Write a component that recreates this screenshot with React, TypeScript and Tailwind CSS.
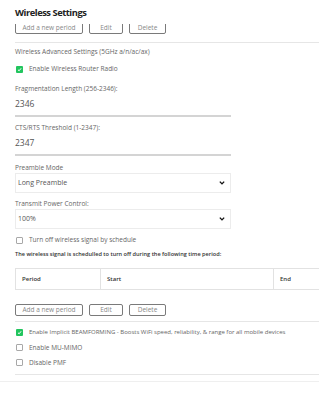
import React from "react";

function Box({ checked }: { checked?: boolean }) {
  return checked ? (
    <span className="flex h-[7px] w-[7px] shrink-0 items-center justify-center rounded-[1px] bg-[#22c55e]">
      <svg width="5" height="5" viewBox="0 0 10 10">
        <path d="M2 5.5 L4.2 7.6 L8.2 2.6" fill="none" stroke="#fff" strokeWidth="2" />
      </svg>
    </span>
  ) : (
    <span className="h-[7px] w-[7px] shrink-0 rounded-[1px] border border-[#a8a8a8] bg-white" />
  );
}

function Buttons() {
  return (
    <div className="flex gap-[6px]">
      {["Add a new period", "Edit", "Delete"].map((t, i) => (
        <button
          key={t}
          className={`h-[12px] rounded-[2px] border border-[#7a7a7a] bg-white text-[6.5px] leading-[10px] text-[#888] ${
            i === 0 ? "w-[68px]" : i === 1 ? "w-[34px]" : "w-[37px]"
          }`}
        >
          {t}
        </button>
      ))}
    </div>
  );
}

function Select({ value }: { value: string }) {
  return (
    <div className="flex h-[20px] w-[216px] items-center justify-between border border-[#ececec] pl-[2px] pr-[5px] text-[7px] text-[#555]">
      <span>{value}</span>
      <svg width="6" height="4" viewBox="0 0 7 5">
        <path d="M0.8 0.8 L3.5 3.6 L6.2 0.8" fill="none" stroke="#111" strokeWidth="1.7" />
      </svg>
    </div>
  );
}

export default function App() {
  return (
    <div
      className="h-[400px] w-[319px] overflow-hidden bg-white pl-[15px] text-[#666]"
      style={{ fontFamily: '"Open Sans", "Liberation Sans", sans-serif' }}
    >
      <h1 className="pt-[6px] text-[9.3px] font-bold leading-[13px] tracking-[-0.45px] text-[#222]">Wireless Settings</h1>

      {/* top row, cut off by the header */}
      <div className="mt-[5px] h-[10px] overflow-hidden">
        <div className="-mt-[2px]">
          <Buttons />
        </div>
      </div>

      <div className="mt-[8px] border-t border-[#e6e6e6]" />

      <p className="mt-[4px] text-[6.5px] leading-[10px]">Wireless Advanced Settings (5GHz a/n/ac/ax)</p>
      <div className="mt-[7px] flex h-[10px] items-center gap-[6px] pl-[1px] text-[6.5px]">
        <Box checked />
        <span>Enable Wireless Router Radio</span>
      </div>

      <p className="mt-[10px] text-[6.5px] leading-[10px]">Fragmentation Length (256-2346):</p>
      <div className="w-[216px] border-b-2 border-[#d4d4d4] pt-[4px] pb-[5px] text-[8.5px] leading-[12px] text-[#555]">2346</div>

      <p className="mt-[6px] text-[6.5px] leading-[10px]">CTS/RTS Threshold (1-2347):</p>
      <div className="w-[216px] border-b-2 border-[#d4d4d4] pt-[4px] pb-[5px] text-[8.5px] leading-[12px] text-[#555]">2347</div>

      <p className="mt-[7px] text-[6.5px] leading-[10px]">Preamble Mode</p>
      <Select value="Long Preamble" />

      <p className="mt-[6px] text-[6.5px] leading-[10px]">Transmit Power Control:</p>
      <Select value="100%" />

      <div className="mt-[6px] flex h-[10px] items-center gap-[6px] pl-[1px] text-[6.5px]">
        <Box />
        <span>Turn off wireless signal by schedule</span>
      </div>
      <p className="mt-[4px] text-[5.6px] font-semibold leading-[10px] text-[#333]">
        The wireless signal is schedulled to turn off during the following time period:
      </p>

      <div className="mt-[9px] flex h-[22px] w-[320px] border border-[#e2e2e2] text-[6px] font-semibold text-[#333]">
        <div className="flex w-[85px] items-center border-r border-[#e2e2e2] pl-[6px]">Period</div>
        <div className="flex w-[173px] items-center border-r border-[#e2e2e2] pl-[6px]">Start</div>
        <div className="flex flex-1 items-center pl-[6px]">End</div>
      </div>

      <div className="mt-[14px]">
        <Buttons />
      </div>

      <div className="mt-[5px] border-t border-[#e6e6e6]" />

      <div className="mt-[3px] text-[6.5px]">
        <div className="flex h-[15px] items-center gap-[6px] pl-[1px]">
          <Box checked />
          <span className="text-[6px]">
            Enable Implicit BEAMFORMING - Boosts WiFi speed, reliability, &amp; range for all mobile devices
          </span>
        </div>
        <div className="flex h-[15px] items-center gap-[6px] pl-[1px]">
          <Box />
          <span>Enable MU-MIMO</span>
        </div>
        <div className="flex h-[15px] items-center gap-[6px] pl-[1px]">
          <Box />
          <span>Disable PMF</span>
        </div>
      </div>

      <div className="mt-[4px] border-t border-[#e6e6e6]" />
      <div className="-ml-[15px] mt-[6px] border-t border-[#efefef]" />
    </div>
  );
}
